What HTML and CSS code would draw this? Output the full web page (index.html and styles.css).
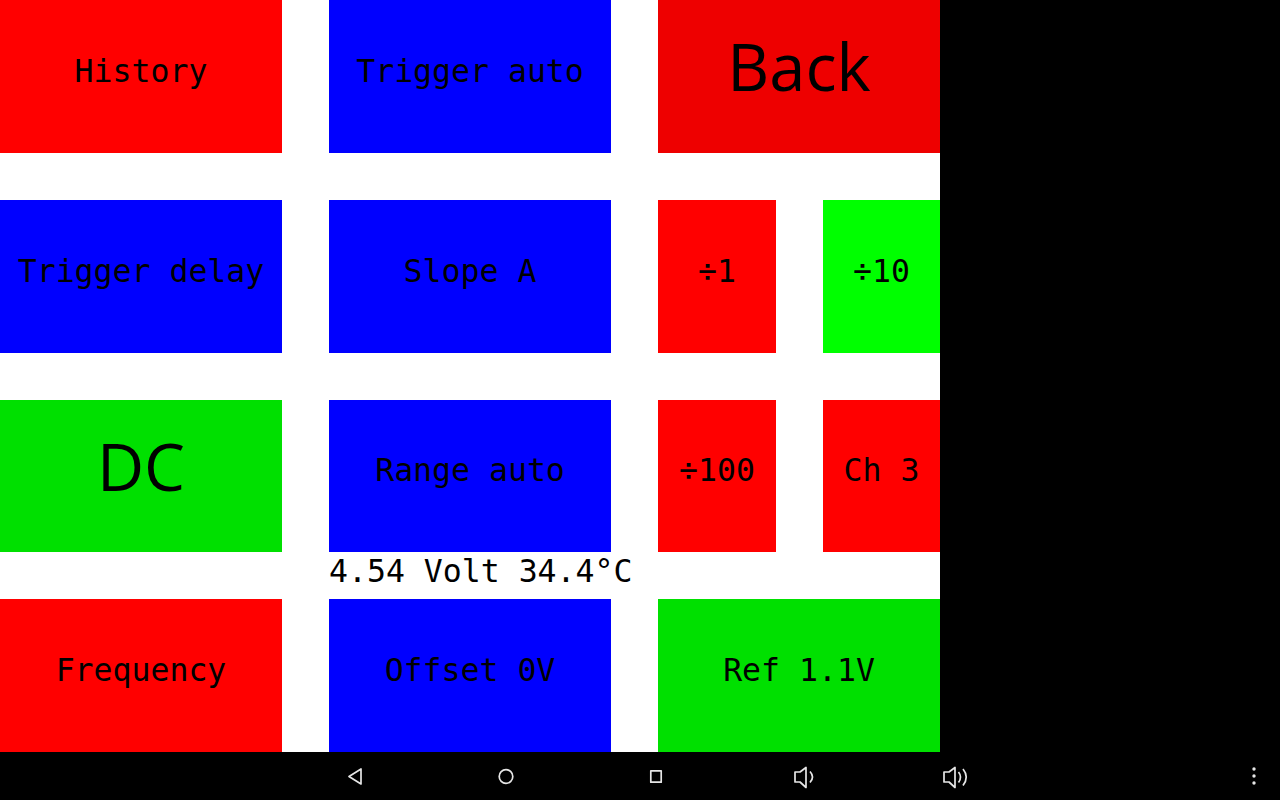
FILE: index.html
```html
<!DOCTYPE html>
<html>
<head>
<meta charset="utf-8">
<link rel="stylesheet" href="styles.css">
</head>
<body>
<div class="screen">
  <div class="main">
    <div class="panel">
      <div class="btn red r1 c1">History</div>
      <div class="btn blue r1 c2">Trigger auto</div>
      <div class="btn darkred big r1 c3">Back</div>

      <div class="btn blue r2 c1">Trigger delay</div>
      <div class="btn blue r2 c2">Slope A</div>
      <div class="split r2 c3">
        <div class="btn red">÷1</div>
        <div class="btn lime">÷10</div>
      </div>

      <div class="btn green big r3 c1">DC</div>
      <div class="btn blue r3 c2">Range auto</div>
      <div class="split r3 c3">
        <div class="btn red">÷100</div>
        <div class="btn red">Ch 3</div>
      </div>

      <div class="status">4.54 Volt 34.4°C</div>

      <div class="btn red r4 c1">Frequency</div>
      <div class="btn blue r4 c2">Offset 0V</div>
      <div class="btn green r4 c3">Ref 1.1V</div>
    </div>
    <div class="side"></div>
  </div>
  <div class="nav">
    <div class="navitem">
      <svg width="28" height="28" viewBox="0 0 28 28"><path d="M20 7 L20 22 L8 14.5 Z" class="ic"/></svg>
    </div>
    <div class="navitem">
      <svg width="28" height="28" viewBox="0 0 28 28"><circle cx="15" cy="14.5" r="6.8" class="ic"/></svg>
    </div>
    <div class="navitem">
      <svg width="28" height="28" viewBox="0 0 28 28"><rect x="9.8" y="8.8" width="10.4" height="11.4" class="ic"/></svg>
    </div>
    <div class="navitem">
      <svg width="28" height="28" viewBox="0 0 28 28"><path d="M4 10 H9 L15 5.5 V25.5 L9 20 H4 Z" class="ic"/><path d="M19 9.5 Q24 15 19 20.5" class="ic"/></svg>
    </div>
    <div class="navitem">
      <svg width="32" height="28" viewBox="0 0 32 28"><path d="M5 10 H10 L16 5.5 V25.5 L10 20 H5 Z" class="ic"/><path d="M19.5 10 Q23.5 15 19.5 20.5" class="ic"/><path d="M24 7 Q30.5 15 24 23.5" class="ic"/></svg>
    </div>
    <div class="navmenu">
      <svg width="28" height="28" viewBox="0 0 28 28"><circle cx="14" cy="7" r="1.7" class="dot"/><circle cx="14" cy="14" r="1.7" class="dot"/><circle cx="14" cy="21" r="1.7" class="dot"/></svg>
    </div>
  </div>
</div>
</body>
</html>
```

FILE: styles.css
```css
html, body {
  margin: 0;
  padding: 0;
  background: #000;
}

.screen {
  width: 1280px;
  height: 800px;
  display: flex;
  flex-direction: column;
  overflow: hidden;
}

.main {
  display: flex;
  height: 752px;
}

.panel {
  width: 940px;
  height: 752px;
  background: #fff;
  display: grid;
  grid-template-columns: 282px 47px 282px 47px 282px;
  grid-template-rows: 153px 47px 153px 47px 152px 47px 153px;
}

.side {
  flex: 1;
  background: #000;
}

.r1 { grid-row: 1; }
.r2 { grid-row: 3; }
.r3 { grid-row: 5; }
.r4 { grid-row: 7; }
.c1 { grid-column: 1; }
.c2 { grid-column: 3; }
.c3 { grid-column: 5; }

.btn {
  display: flex;
  align-items: center;
  justify-content: center;
  box-sizing: border-box;
  padding-bottom: 12px;
  font-family: "DejaVu Sans Mono", "Liberation Mono", monospace;
  font-size: 31.5px;
  color: #000;
  white-space: nowrap;
}

.big {
  font-family: "Open Sans", "Noto Sans", sans-serif;
  font-size: 65px;
  padding-bottom: 21px;
}

.split {
  display: grid;
  grid-template-columns: 118px 117px;
  column-gap: 47px;
}

.red { background: #ff0000; }
.darkred { background: #ee0000; }
.blue { background: #0000ff; }
.lime { background: #00ff00; }
.green { background: #00e000; }

.status {
  grid-row: 6;
  grid-column: 3 / span 3;
  display: flex;
  align-items: center;
  padding-bottom: 10px;
  box-sizing: border-box;
  font-family: "DejaVu Sans Mono", "Liberation Mono", monospace;
  font-size: 31.5px;
  color: #000;
  white-space: nowrap;
}

.nav {
  height: 48px;
  background: #000;
  display: flex;
  align-items: center;
  padding-left: 280px;
}

.navitem {
  width: 150px;
  display: flex;
  justify-content: center;
}

.navmenu {
  margin-left: auto;
  width: 52px;
  display: flex;
  justify-content: center;
}

.navitem svg, .navmenu svg {
  display: block;
}

.ic {
  fill: none;
  stroke: #e6e6e6;
  stroke-width: 1.7;
  stroke-linejoin: round;
}

.dot {
  fill: #e6e6e6;
}
```
